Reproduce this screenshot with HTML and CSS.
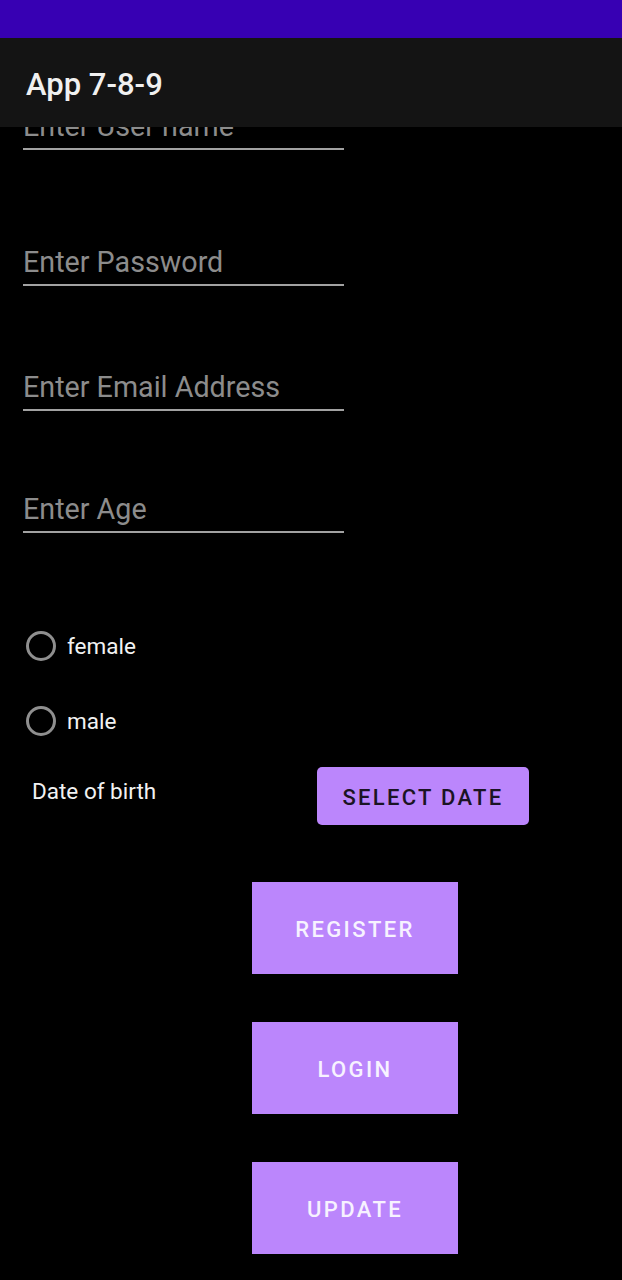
FILE: index.html
```html
<!DOCTYPE html>
<html lang="en">
<head>
<meta charset="utf-8">
<title>App 7-8-9</title>
<link rel="stylesheet" href="styles.css">
</head>
<body>
<div class="status-bar"></div>
<header class="app-bar"><h1 class="app-title">App 7-8-9</h1></header>
<main class="scroll">
  <form class="form">
    <div class="field field-user">Enter User name</div>
    <div class="field field-pass">Enter Password</div>
    <div class="field field-email">Enter Email Address</div>
    <div class="field field-age">Enter Age</div>

    <label class="radio radio-female"><span class="radio-circle"></span><span class="radio-text">female</span></label>
    <label class="radio radio-male"><span class="radio-circle"></span><span class="radio-text">male</span></label>

    <div class="date-row">
      <span class="date-label">Date of birth</span>
      <span class="btn-date">SELECT DATE</span>
    </div>

    <div class="actions">
      <span class="btn-action">REGISTER</span>
      <span class="btn-action">LOGIN</span>
      <span class="btn-action">UPDATE</span>
    </div>
  </form>
</main>
</body>
</html>
```
FILE: styles.css
```css
html, body {
  margin: 0;
  padding: 0;
  background: #000;
  font-family: Roboto, "Noto Sans", "Liberation Sans", sans-serif;
}
body {
  width: 622px;
  height: 1280px;
  overflow: hidden;
}
.status-bar {
  height: 38px;
  background: #3700b3;
}
.app-bar {
  height: 89px;
  box-sizing: border-box;
  padding: 4px 0 0 26px;
  background: #141414;
  display: flex;
  align-items: center;
  position: relative;
  z-index: 1;
}
.app-title {
  margin: 0;
  font-size: 31px;
  font-weight: 500;
  color: #f0f0f0;
  line-height: 38px;
}
.scroll {
  height: 1153px;
  overflow: hidden;
}
.form {
  margin: -17px 0 0 0;
  display: flex;
  flex-direction: column;
}
.field {
  width: 321px;
  margin-left: 23px;
  font-size: 28.7px;
  line-height: 33px;
  padding-bottom: 5px;
  border-bottom: 2px solid #a2a2a2;
  color: #8c8c8c;
  white-space: nowrap;
}
.field-pass { margin-top: 96px; }
.field-email { margin-top: 85px; }
.field-age { margin-top: 82px; }

.radio {
  display: flex;
  align-items: center;
  gap: 11px;
  margin-left: 26px;
  height: 30px;
}
.radio-female { margin-top: 98px; }
.radio-male { margin-top: 45px; }
.radio-circle {
  width: 30px;
  height: 30px;
  box-sizing: border-box;
  border: 3px solid #8f8f8f;
  border-radius: 50%;
}
.radio-text {
  font-size: 22.5px;
  line-height: 28px;
  color: #f2f2f2;
}

.date-row {
  margin-top: 31px;
  display: grid;
  grid-template-columns: 285px 212px;
  padding-left: 32px;
  align-items: start;
}
.date-label {
  margin-top: 9px;
  font-size: 22.5px;
  line-height: 30px;
  color: #f2f2f2;
}
.btn-date {
  height: 58px;
  box-sizing: border-box;
  padding-top: 4px;
  line-height: 54px;
  text-align: center;
  background: #bb86fc;
  border-radius: 5px;
  color: #1b1424;
  font-size: 22px;
  font-weight: 500;
  letter-spacing: 2.3px;
}

.actions {
  margin-top: 57px;
  margin-left: 252px;
  display: flex;
  flex-direction: column;
  gap: 48px;
}
.btn-action {
  width: 206px;
  height: 92px;
  box-sizing: border-box;
  padding-top: 4px;
  line-height: 87px;
  text-align: center;
  background: #bb86fc;
  color: #f7f2ff;
  font-size: 22px;
  font-weight: 500;
  letter-spacing: 2.4px;
}
```
